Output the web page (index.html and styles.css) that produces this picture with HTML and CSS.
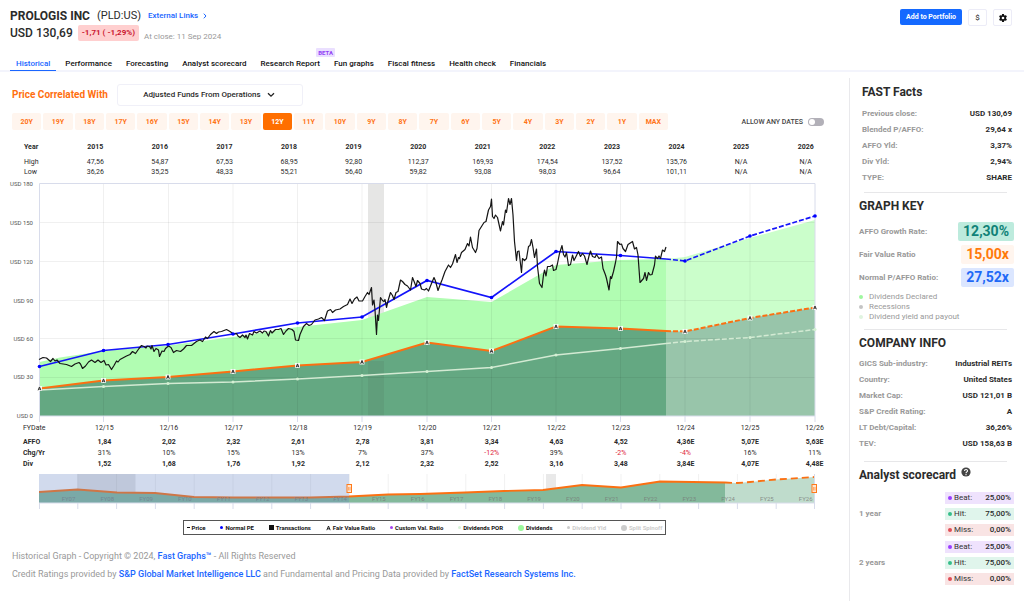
FILE: index.html
```html
<!DOCTYPE html>
<html lang="en">
<head>
<meta charset="utf-8">
<title>Prologis Inc (PLD:US)</title>
<meta name="viewport" content="width=device-width, initial-scale=1">
<link rel="stylesheet" href="styles.css">
</head>
<body>
<header class="top">
  <div class="top-row">
    <div class="identity">
      <div class="name-row">
        <h1>PROLOGIS INC</h1>
        <span class="ticker">(PLD:US)</span>
        <a class="external" href="#">External Links
          <svg viewBox="0 0 4 6" width="4" height="6" aria-hidden="true"><path d="M.8.7 3 3 .8 5.3" fill="none" stroke="currentColor"/></svg>
        </a>
      </div>
      <div class="price-row">
        <span class="price">USD 130,69</span>
        <span class="change">-1,71 ( -1,29%)</span>
        <span class="close-date">At close: 11 Sep 2024</span>
      </div>
    </div>
    <div class="actions">
      <button class="primary" type="button">Add to Portfolio</button>
      <button class="icon-button" type="button" aria-label="Currency">$</button>
      <button class="icon-button" type="button" aria-label="Settings">
        <svg viewBox="0 0 24 24" width="10" height="10" aria-hidden="true"><path fill="#111" d="M19.14 12.94c.04-.3.06-.61.06-.94s-.02-.64-.07-.94l2.03-1.58a.49.49 0 0 0 .12-.61l-1.92-3.32a.49.49 0 0 0-.59-.22l-2.39.96a7 7 0 0 0-1.62-.94l-.36-2.54a.48.48 0 0 0-.48-.41h-3.84a.48.48 0 0 0-.47.41l-.36 2.54a7.4 7.4 0 0 0-1.62.94l-2.39-.96a.48.48 0 0 0-.59.22L2.74 8.87a.48.48 0 0 0 .12.61l2.03 1.58a7.5 7.5 0 0 0 0 1.88l-2.03 1.58a.49.49 0 0 0-.12.61l1.92 3.32c.12.22.37.29.59.22l2.39-.96c.5.38 1.03.7 1.62.94l.36 2.54c.05.24.24.41.48.41h3.84c.24 0 .44-.17.47-.41l.36-2.54a7.3 7.3 0 0 0 1.62-.94l2.39.96c.22.08.47 0 .59-.22l1.92-3.32a.48.48 0 0 0-.12-.61zM12 15.2a3.2 3.2 0 1 1 0-6.4 3.2 3.2 0 0 1 0 6.4z"/></svg>
      </button>
    </div>
  </div>
  <nav class="tabs">
    <a class="active" href="#">Historical</a>
    <a href="#">Performance</a>
    <a href="#">Forecasting</a>
    <a href="#">Analyst scorecard</a>
    <a href="#">Research Report<span class="beta">BETA</span></a>
    <a href="#">Fun graphs</a>
    <a href="#">Fiscal fitness</a>
    <a href="#">Health check</a>
    <a href="#">Financials</a>
  </nav>
</header>

<div class="layout">
<main>
  <div class="metric-row">
    <label for="metric">Price Correlated With</label>
    <div class="select-wrap">
      <select id="metric"><option>Adjusted Funds From Operations</option></select>
      <svg class="chevron" viewBox="0 0 8 6" width="8" height="6" aria-hidden="true"><path d="M1 1.2 4 4.2 7 1.2" fill="none" stroke="#222" stroke-width="1.3"/></svg>
    </div>
  </div>
  <div class="range-row">
    <div class="ranges">
      <button type="button">20Y</button><button type="button">19Y</button><button type="button">18Y</button><button type="button">17Y</button><button type="button">16Y</button><button type="button">15Y</button><button type="button">14Y</button><button type="button">13Y</button><button type="button" class="selected">12Y</button><button type="button">11Y</button><button type="button">10Y</button><button type="button">9Y</button><button type="button">8Y</button><button type="button">7Y</button><button type="button">6Y</button><button type="button">5Y</button><button type="button">4Y</button><button type="button">3Y</button><button type="button">2Y</button><button type="button">1Y</button><button type="button">MAX</button>
    </div>
    <label class="toggle" for="any-dates">ALLOW ANY DATES <input id="any-dates" type="checkbox"></label>
  </div>

  <table class="years high-low">
    <thead><tr><th>Year</th><th>2015</th><th>2016</th><th>2017</th><th>2018</th><th>2019</th><th>2020</th><th>2021</th><th>2022</th><th>2023</th><th>2024</th><th>2025</th><th>2026</th></tr></thead>
    <tbody>
      <tr><th>High</th><td>47,56</td><td>54,87</td><td>67,53</td><td>68,95</td><td>92,80</td><td>112,37</td><td>169,93</td><td>174,54</td><td>137,52</td><td>135,76</td><td>N/A</td><td>N/A</td></tr>
      <tr><th>Low</th><td>36,26</td><td>35,25</td><td>48,33</td><td>55,21</td><td>56,40</td><td>59,82</td><td>93,08</td><td>98,03</td><td>96,64</td><td>101,11</td><td>N/A</td><td>N/A</td></tr>
    </tbody>
  </table>

  <svg class="chart" viewBox="0 177 849 245" role="img" aria-label="Price and AFFO history">
    <defs>
      <g id="fair-mark"><rect x="-2.5" y="-2.5" width="5" height="5" fill="#fff" fill-opacity=".9"/><path d="M-1.4 1.8 0-1.6 1.4 1.8M-.8.6H.8" fill="none" stroke="#222" stroke-width=".9"/></g>
    </defs>
    <rect x="368" y="184" width="16" height="232" fill="#e6e6e5"/>
    <path class="area-light" d="M39.500 362 60 357.500 103.500 351 168 345.500 233 337 297.500 327 362 320 427 297 491.500 302 556 265 620.500 260 666 259V331L620.500 328.500 556 326.500 491.500 351 427 342.500 362 362 297.500 365.500 233 371.500 168 377 103.500 380.500 39.500 388.500Z"/>
    <path class="area-light-est" d="M666 259 685 257 750 238 815 220V307.500L750 318 685 331.500 666 331Z"/>
    <path class="area-dark" d="M39.500 388.500 103.500 380.500 168 377 233 371.500 297.500 365.500 362 362 427 342.500 491.500 351 556 326.500 620.500 328.500 666 331V416H39.500Z"/>
    <path class="area-dark-est" d="M666 331 685 331.500 750 318 815 307.500V416H666Z"/>
    <rect x="368" y="361" width="16" height="55" fill="#333" fill-opacity=".08"/>
    <path class="grid" d="M39 222.500H815M39 261.500H815M39 300.500H815M39 338.500H815M39 377.500H815M103.500 184V416M168.500 184V416M233 184V416M297.500 184V416M362 184V416M427 184V416M491.500 184V416M556 184V416M620.500 184V416M685 184V416M750 184V416"/>
    <path class="frame" d="M39.500 422V183.500H815V422M39.500 416H815M103.500 416v6M168.500 416v6M233 416v6M297.500 416v6M362 416v6M427 416v6M491.500 416v6M556 416v6M620.500 416v6M685 416v6M750 416v6"/>
    <g class="payout"><path d="M39.500 390 103.500 386.500 168 383.500 233 382 297.500 379 362 375.500 427 371.500 491.500 367.500 556 355 620.500 348.500 666 343.500"/><path class="dashed" d="M666 343.500 685 341.500 750 337.500 815 329.500"/></g>
    <g class="fair"><path d="M39.500 388.500 103.500 380.500 168 377 233 371.500 297.500 365.500 362 362 427 342.500 491.500 351 556 326.500 620.500 328.500 666 331"/><path class="dashed" d="M666 331 685 331.500 750 318 815 307.500"/></g>
    <g class="normal"><path d="M39.500 366.500 103.500 350.500 168 344.500 233 334 297.500 323 362 317 427 280.500 491.500 297.500 556 251.500 620.500 255.500 666 259"/><path class="dashed" d="M666 259 685 261 750 236 815 216"/></g>
    <path class="price-line" d="M39 359.500 43 357.500 46.500 358 50.500 361.500 53 358.500 55 361 57 360 60 363.500 66.500 364.500 71.500 366.500 75 364 79 362.500 80.500 364 82.500 368.500 85.500 366 88.500 362 91.500 360 95 362.500 98 360 101 362.500 104 360.500 106 365 108.500 364.500 111.500 369.500 114 365.500 116.500 361 118 362 120 359.500 126.500 356 130 354.500 132.500 351.500 135.500 353.500 139 348.500 141.500 345.500 144 346.500 146 348 147 346 149.500 346.500 151 349 152 345.500 154 351.500 156 348.500 158.500 350 159.500 356.500 162 351 164 351.500 165.500 348.500 168.500 346 171 347.500 173.500 352.500 176.500 350.500 180.500 351.500 183.500 349 186.500 345.500 191.500 345.500 196.500 341.500 200 340 202.500 341.500 205.500 337 207.500 338.500 210.500 334.500 214 331.500 216.500 333.500 218.500 332 221.500 331.500 226.500 329.500 230 331.500 233.500 334 236.500 333.500 238 336 240 337.500 242.500 335 245 337.500 246 335 247.500 339 249.500 333.500 252.500 335 254 331.500 256.500 333 260 331 262.500 333 264 331 266 331.500 268.500 336 270.500 330.500 272 333 275.500 329.500 278.500 329.500 281 328.500 283.500 334.500 286 331 288.500 328.500 292 329.500 294 331.500 295.500 340 298.500 340.500 300 334.500 303.500 326.500 306.500 323.500 309 325.500 311.500 324.500 315 320 318.500 319 321.500 317.500 324.500 320.500 327.500 311 330.500 309.500 332.500 312.500 335.500 310 340 309 343.500 306.500 347.500 304.500 350 299 352 303.500 354.500 299 357 297 359 301 362.500 301 365 296.500 367.500 292.500 369 294.500 371.500 287.500 372.500 305 374 300 375 310 376.500 334.500 377.500 315 378.500 320.500 380.500 297.500 382.500 300.500 384 301.500 385 299.500 386.500 307.500 388 301 390.500 292.500 392.500 295.500 394 299.500 396 292.500 398 291.500 400.500 280 402.500 281.500 405 284.500 407.500 286 410.500 290 412.500 277.500 414.500 282.500 416 286.500 417.500 280.500 420 283.500 421.500 289 424.500 290 426.500 288.500 428.500 291 431.500 283.500 434 277.500 435.500 281 438 290.500 440 285 442 280 445 271.500 448.500 265 450.500 267.500 452.500 264 455.500 254.500 457 262.500 458.500 257.500 459.500 258.500 461.500 252.500 465 249.500 467.500 243.500 469 246 470.500 237 472.500 247.500 475.500 252.500 477 248.500 479 230.500 481.500 226.500 484 222.500 486 221.500 488.500 210 490.500 206.500 491.500 199 492.500 216.500 494 218.500 495.500 215 497.500 217.500 500.500 231 502.500 221.500 503.500 225 505.500 210 506.500 212.500 508.500 198.500 510 204.500 511.500 198.500 513 215 514.500 241.500 516.500 260.500 517.500 251.500 519 251 521.500 272.500 522.500 258.500 524.500 260.500 526.500 258.500 528.500 246.500 530 245.500 531.500 239.500 533 247.500 534.500 257.500 536.500 249 537.500 266.500 539.500 283.500 542 287.500 543.500 275 544.500 270 546 276 547.500 266.500 550 266.500 552.500 265 553.500 270.500 556 269.500 557.500 263.500 559.500 253.500 562 245.500 563.500 254.500 565 257 566.500 252.500 568.500 265.500 570.500 264.500 572.500 255 574 260.500 576 256.500 578.500 251.500 580.500 256.500 582.500 253.500 584.500 256 587 264.500 589 256 590.500 251 592.500 256.500 595 257.500 596.500 254.500 599 258.500 601.500 257 603 268.500 605.500 275 606.500 278.500 609 290 610.500 276.500 611.500 278.500 613.500 271.500 615.500 262.500 616.500 257 617.500 241.500 620 244.500 621.500 244 623 248.500 625.500 251.500 628 244.500 632.500 241.500 634.500 249 636.500 247.500 638 255 640 282.500 643.500 278.500 645 272.500 646.500 280.500 648.500 272.500 650 275 652 274.500 654.500 265 655.500 256 657.500 258.500 659 256 660.500 258.500 662.500 250 664.500 251.500 666 247"/>
    <g fill="#d3f0d3"><circle cx="103.500" cy="386.500" r="1.500"/><circle cx="168" cy="383.500" r="1.500"/><circle cx="233" cy="382" r="1.500"/><circle cx="297.500" cy="379" r="1.500"/><circle cx="362" cy="375.500" r="1.500"/><circle cx="427" cy="371.500" r="1.500"/><circle cx="491.500" cy="367.500" r="1.500"/><circle cx="556" cy="355" r="1.500"/><circle cx="620.500" cy="348.500" r="1.500"/><circle cx="685" cy="341.500" r="1.500"/><circle cx="750" cy="337.500" r="1.500"/><circle cx="815" cy="329.500" r="1.500"/></g>
    <g fill="#00f"><circle cx="39.500" cy="366.500" r="1.800"/><circle cx="103.500" cy="350.500" r="1.800"/><circle cx="168" cy="344.500" r="1.800"/><circle cx="233" cy="334" r="1.800"/><circle cx="297.500" cy="323" r="1.800"/><circle cx="362" cy="317" r="1.800"/><circle cx="427" cy="280.500" r="1.800"/><circle cx="491.500" cy="297.500" r="1.800"/><circle cx="556" cy="251.500" r="1.800"/><circle cx="620.500" cy="255.500" r="1.800"/><circle cx="685" cy="261" r="1.800"/><circle cx="750" cy="236" r="1.800"/><circle cx="815" cy="216" r="1.800"/></g>
    <use href="#fair-mark" x="39.500" y="388.500"/><use href="#fair-mark" x="103.500" y="380.500"/><use href="#fair-mark" x="168" y="377"/><use href="#fair-mark" x="233" y="371.500"/><use href="#fair-mark" x="297.500" y="365.500"/><use href="#fair-mark" x="362" y="362"/><use href="#fair-mark" x="427" y="342.500"/><use href="#fair-mark" x="491.500" y="351"/><use href="#fair-mark" x="556" y="326.500"/><use href="#fair-mark" x="620.500" y="328.500"/><use href="#fair-mark" x="685" y="331.500"/><use href="#fair-mark" x="750" y="318"/><use href="#fair-mark" x="815" y="307.500"/>
    <g class="axis"><text x="33" y="186">USD 180</text><text x="33" y="225">USD 150</text><text x="33" y="264">USD 120</text><text x="33" y="303">USD 90</text><text x="33" y="341">USD 60</text><text x="33" y="379">USD 30</text><text x="33" y="418">USD 0</text></g>
  </svg>

  <table class="years fiscal">
    <thead><tr><th>FYDate</th><th>12/15</th><th>12/16</th><th>12/17</th><th>12/18</th><th>12/19</th><th>12/20</th><th>12/21</th><th>12/22</th><th>12/23</th><th>12/24</th><th>12/25</th><th>12/26</th></tr></thead>
    <tbody>
      <tr class="strong"><th>AFFO</th><td>1,84</td><td>2,02</td><td>2,32</td><td>2,61</td><td>2,78</td><td>3,81</td><td>3,34</td><td>4,63</td><td>4,52</td><td>4,36E</td><td>5,07E</td><td>5,63E</td></tr>
      <tr><th>Chg/Yr</th><td>31%</td><td>10%</td><td>15%</td><td>13%</td><td>7%</td><td>37%</td><td class="neg">-12%</td><td>39%</td><td class="neg">-2%</td><td class="neg">-4%</td><td>16%</td><td>11%</td></tr>
      <tr class="strong"><th>Div</th><td>1,52</td><td>1,68</td><td>1,76</td><td>1,92</td><td>2,12</td><td>2,32</td><td>2,52</td><td>3,16</td><td>3,48</td><td>3,84E</td><td>4,07E</td><td>4,48E</td></tr>
    </tbody>
  </table>

  <svg class="chart" viewBox="0 470 849 42" role="img" aria-label="Range navigator">
    <rect x="77.500" y="474" width="58" height="29" fill="#e6e6e5"/><rect x="546" y="474" width="10" height="29" fill="#e9e9e9"/>
    <path class="grid" d="M77.800 474V503M116.600 474V503M155.400 474V503M194.200 474V503M233 474V503M271.800 474V503M310.600 474V503M349.400 474V503M388.200 474V503M427 474V503M465.800 474V503M504.600 474V503M543.400 474V503M582.200 474V503M621 474V503M659.800 474V503M698.600 474V503M737.400 474V503M776.200 474V503"/>
    <path class="nav-fill" d="M39 492 77.500 489.500 117 492.500 155 493 194 497 233 497.500 310 497.500 349 496.500 388 494.500 420 494 465 492.500 504 491 543 490 582 485 621 487.500 660 481.500 725 482.500V503H39Z"/>
    <path class="nav-fill-est" d="M725 482.500 737 483 750 482 776 479.500 815 477V503H725Z"/>
    <g class="nav-line"><path d="M39 492 77.500 489.500 117 492.500 155 493 194 497 233 497.500 310 497.500 349 496.500 388 494.500 420 494 465 492.500 504 491 543 490 582 485 621 487.500 660 481.500 725 482.500"/><path stroke-dasharray="7 4" d="M725 482.500 737 483 750 482 776 479.500 815 477"/></g>
    <g class="nav-years"><text x="68.500" y="501">FY07</text><text x="107.300" y="501">FY08</text><text x="146.100" y="501">FY09</text><text x="184.900" y="501">FY10</text><text x="223.700" y="501">FY11</text><text x="262.500" y="501">FY12</text><text x="301.300" y="501">FY13</text><text x="340.100" y="501">FY14</text><text x="378.900" y="501">FY15</text><text x="417.700" y="501">FY16</text><text x="456.500" y="501">FY17</text><text x="495.300" y="501">FY18</text><text x="534.100" y="501">FY19</text><text x="572.900" y="501">FY20</text><text x="611.700" y="501">FY21</text><text x="650.500" y="501">FY22</text><text x="689.300" y="501">FY23</text><text x="728.100" y="501">FY24</text><text x="766.900" y="501">FY25</text><text x="805.700" y="501">FY26</text></g>
    <rect x="39" y="474" width="310" height="29" fill="#6685c2" fill-opacity=".3"/>
    <path class="frame" d="M39 503H815M39.500 503v6M77.800 503v6M116.600 503v6M155.400 503v6M194.200 503v6M233 503v6M271.800 503v6M310.600 503v6M349.400 503v6M388.200 503v6M427 503v6M465.800 503v6M504.600 503v6M543.400 503v6M582.200 503v6M621 503v6M659.800 503v6M698.600 503v6M737.400 503v6M776.200 503v6M814.500 474v35"/>
    <g fill="#ffe6d1" stroke="#ff7a1a"><rect x="347" y="484.500" width="4.500" height="8"/><rect x="812" y="484.500" width="4.500" height="8"/><path d="M348.600 487v3.500M350 487v3.500M813.600 487v3.500M815 487v3.500" stroke-width=".6"/></g>
  </svg>

  <ul class="legend">
    <li><i class="mark dash"></i>Price</li>
    <li><i class="mark dot blue"></i>Normal PE</li>
    <li><i class="mark square"></i>Transactions</li>
    <li><svg viewBox="0 0 5 6" width="5" height="6" aria-hidden="true"><path d="M.8 5.2 2.500 1 4.200 5.200M1.500 3.800H3.500" fill="none" stroke="#111" stroke-width=".9"/></svg>Fair Value Ratio</li>
    <li><i class="mark dot purple"></i>Custom Val. Ratio</li>
    <li><i class="mark dot pale"></i>Dividends POR</li>
    <li><i class="mark dot big green"></i>Dividends</li>
    <li class="off"><i class="mark dot"></i>Dividend Yld</li>
    <li class="off"><i class="mark dot big"></i>Split Spinoff</li>
  </ul>

  <footer>
    <p>Historical Graph - Copyright © 2024, <a href="#">Fast Graphs™</a> - All Rights Reserved</p>
    <p>Credit Ratings provided by <a href="#">S&amp;P Global Market Intelligence LLC</a> and Fundamental and Pricing Data provided by <a href="#">FactSet Research Systems Inc.</a></p>
  </footer>
</main>

<aside>
  <section class="facts">
    <h2>FAST Facts</h2>
    <dl>
      <div><dt>Previous close:</dt><dd>USD 130,69</dd></div>
      <div><dt>Blended P/AFFO:</dt><dd>29,64 x</dd></div>
      <div><dt>AFFO Yld:</dt><dd>3,37%</dd></div>
      <div><dt>Div Yld:</dt><dd>2,94%</dd></div>
      <div><dt>TYPE:</dt><dd>SHARE</dd></div>
    </dl>
  </section>
  <section>
    <h2>GRAPH KEY</h2>
    <dl class="ratios">
      <div><dt>AFFO Growth Rate:</dt><dd class="growth">12,30%</dd></div>
      <div><dt>Fair Value Ratio</dt><dd class="fair-value">15,00x</dd></div>
      <div><dt>Normal P/AFFO Ratio:</dt><dd class="normal-value">27,52x</dd></div>
    </dl>
    <ul class="keys">
      <li><i class="bullet declared"></i>Dividends Declared</li>
      <li><i class="bullet recession"></i>Recessions</li>
      <li><i class="bullet yield"></i>Dividend yield and payout</li>
    </ul>
  </section>
  <section class="company">
    <h2>COMPANY INFO</h2>
    <dl>
      <div><dt>GICS Sub-industry:</dt><dd>Industrial REITs</dd></div>
      <div><dt>Country:</dt><dd>United States</dd></div>
      <div><dt>Market Cap:</dt><dd>USD 121,01 B</dd></div>
      <div><dt>S&amp;P Credit Rating:</dt><dd>A</dd></div>
      <div><dt>LT Debt/Capital:</dt><dd>36,26%</dd></div>
      <div><dt>TEV:</dt><dd>USD 158,63 B</dd></div>
    </dl>
  </section>
  <section>
    <h2>Analyst scorecard
      <svg viewBox="0 0 10 10" width="10" height="10" aria-hidden="true"><circle cx="5" cy="5" r="4.600" fill="#444"/><path d="M3.500 4C3.500 2 6.600 2 6.500 3.900 6.500 4.900 5 4.800 5 6.200M5 7v1.200" fill="none" stroke="#fff" stroke-width="1.100"/></svg>
    </h2>
    <div class="scores">
      <div class="score">
        <span>1 year</span>
        <dl><div class="beat"><dt>Beat:</dt><dd>25,00%</dd></div><div class="hit"><dt>Hit:</dt><dd>75,00%</dd></div><div class="miss"><dt>Miss:</dt><dd>0,00%</dd></div></dl>
      </div>
      <div class="score">
        <span>2 years</span>
        <dl><div class="beat"><dt>Beat:</dt><dd>25,00%</dd></div><div class="hit"><dt>Hit:</dt><dd>75,00%</dd></div><div class="miss"><dt>Miss:</dt><dd>0,00%</dd></div></dl>
      </div>
    </div>
  </section>
</aside>
</div>
</body>
</html>
```

FILE: styles.css
```css
* { box-sizing: border-box; }
body { display: flex; flex-direction: column; min-height: 100vh; margin: 0; background: #fff; color: #2b2b2b; font-family: Roboto, "Liberation Sans", sans-serif; font-size: 8px; line-height: 10px; }
h1, h2, p, ul, dl, dd { margin: 0; padding: 0; }
ul { list-style: none; }
a { color: #1a66ff; text-decoration: none; }
button, select, input { font: inherit; margin: 0; }
svg { flex: none; }

.top { border-bottom: 2px solid #f3f4fc; }
.top-row { display: flex; justify-content: space-between; align-items: flex-start; padding: 8px 12px 0 10px; }
.name-row, .price-row { display: flex; align-items: center; }
.name-row { gap: 7px; height: 16px; }
h1 { font-size: 12px; line-height: 16px; font-weight: 700; }
.ticker { font-size: 11px; line-height: 16px; }
.external { display: flex; align-items: center; gap: 5px; font-weight: 500; }
.price-row { gap: 5px; height: 18px; }
.price { font-size: 12px; font-weight: 500; }
.change { padding: 0 4px; border-radius: 2px; background: #ffcfcf; color: #cb1730; font-size: 8px; line-height: 16px; font-weight: 700; }
.close-date { color: #999; padding-top: 7px; }
.actions { display: flex; gap: 6px; padding-top: 1px; }
.primary { height: 16px; padding: 0 6px; border: 0; border-radius: 2px; background: #1469ff; color: #fff; font-size: 7px; font-weight: 700; }
.icon-button { display: flex; align-items: center; justify-content: center; width: 19px; height: 17px; padding: 0; border: 1px solid #ececf7; border-radius: 2px; background: #fff; color: #222; font-size: 8px; }
.tabs { display: flex; padding: 17px 0 0 10px; margin-bottom: -1px; }
.tabs a { position: relative; padding: 0 7px 2px; line-height: 9px; color: #111; font-weight: 500; border-bottom: 1px solid transparent; }
.tabs .active { padding: 0 6px 2px; color: #1a66ff; border-color: #1a66ff; margin-right: 2px; }
.beta { position: absolute; top: -11px; right: -8px; padding: 0 2px; border-radius: 1px; background: #eadfff; color: #9242f5; font-size: 6px; line-height: 9px; font-weight: 700; }

.layout { display: grid; flex: 1; grid-template-columns: minmax(0, 1fr) 175px; }
main { min-width: 0; padding-top: 12px; }
.metric-row { display: flex; align-items: center; gap: 9px; padding-left: 12px; }
.metric-row label { color: #ff6f0f; font-size: 10px; font-weight: 700; }
.select-wrap { position: relative; }
.select-wrap select { width: 186px; height: 22px; padding: 0 16px 0 0; border: 1px solid #f0f0f8; border-radius: 3px; background: #fff; color: #2b2b2b; font-weight: 500; appearance: none; text-align-last: center; }
.chevron { position: absolute; right: 28px; top: 8px; pointer-events: none; }
.range-row { display: flex; justify-content: space-between; align-items: center; padding: 7px 25px 9px 12px; }
.ranges { display: grid; grid-template-columns: repeat(21, minmax(0, 1fr)); gap: 2px; flex: 0 1 656px; }
.ranges button { height: 17px; padding: 0; border: 0; border-radius: 2px; background: #fff5ee; color: #ff7417; font-size: 7px; font-weight: 700; }
.ranges .selected { background: #ff6f00; color: #fff; }
.toggle { display: flex; align-items: center; gap: 5px; color: #444; font-size: 7px; font-weight: 500; }
.toggle input { display: flex; align-items: center; width: 16px; height: 8px; padding: 1px; border-radius: 4px; background: #b2b0b8; appearance: none; }
.toggle input::before { content: ""; width: 6px; height: 6px; border-radius: 50%; background: #fff; }

.years { table-layout: fixed; border-collapse: collapse; font-size: 7px; line-height: 11px; text-align: center; }
.years th, .years td { padding: 0; }
.years th { font-weight: 400; }
.years th:first-child { width: 39px; text-align: left; }
.high-low { width: calc(100% - 35px); margin-left: 24px; line-height: 10px; }
.high-low thead th { padding-bottom: 2px; font-weight: 700; line-height: 16px; }
.fiscal { width: calc(100% - 25px); margin-left: 23px; }
.fiscal th:first-child { width: 49px; }
.fiscal thead th { padding-bottom: 2px; line-height: 13px; }
.strong th, .strong td, .fiscal tbody th:first-child { font-weight: 700; }
.neg { color: #e0263c; }

.chart { display: block; width: 100%; height: auto; font-family: Roboto, "Liberation Sans", sans-serif; }
.grid { fill: none; stroke: #000; stroke-opacity: .06; }
.frame { fill: none; stroke: #d8dceb; }
.area-light { fill: #b1fdb2; }
.area-light-est { fill: #cbfecb; }
.area-dark { fill: #64a882; }
.area-dark-est { fill: #98c5aa; }
.payout path { fill: none; stroke: #d3ead3; stroke-width: 1.5; }
.fair path { fill: none; stroke: #fb7012; stroke-width: 2; }
.normal path { fill: none; stroke: #1414fa; stroke-width: 1.7; }
.chart .dashed { stroke-dasharray: 5 2; }
.price-line { fill: none; stroke: #151515; stroke-width: 1.2; stroke-linejoin: round; }
.axis text { font-size: 6px; fill: #555; text-anchor: end; }
.nav-fill { fill: #83b99b; }
.nav-fill-est { fill: #bfdccc; }
.nav-line path { fill: none; stroke: #fb7012; stroke-width: 1.8; }
.nav-years text { font-size: 6px; fill: #777; fill-opacity: .8; text-anchor: middle; }

.legend { display: flex; justify-content: space-between; width: 57%; min-width: 481px; height: 15px; margin: 8px auto 0; padding: 0 3px; border: 1px solid #555; color: #111; font-size: 6px; font-weight: 700; }
.legend li { display: flex; align-items: center; gap: 2px; }
.mark { width: 3px; height: 3px; background: #111; }
.dash { height: 1px; }
.square { width: 5px; height: 5px; }
.dot { border-radius: 50%; background: #ccc; }
.big { width: 6px; height: 6px; }
.blue { background: #00f; }
.purple { background: #a541ee; }
.pale { background: #d7f3d7; }
.green { background: #9cf99c; }
.off { color: #ccc; }
footer { padding: 12px 12px 0; color: #999; font-size: 9px; line-height: 18px; }
footer a { font-weight: 500; }

aside { margin-top: 6px; padding: 6px 12px 0 9px; border-left: 1px solid #e9e9ec; }
h2 { display: flex; align-items: flex-start; gap: 5px; font-size: 12px; line-height: 16px; font-weight: 700; }
.facts { padding-left: 3px; }
section + section::before { content: ""; display: block; height: 1px; margin: 0 5px 5px; background: #e7e7e9; }
dl > div { display: flex; justify-content: space-between; align-items: center; height: 16px; }
dt { color: #999; font-weight: 700; }
dd { font-weight: 700; text-align: right; }
.facts dl { padding: 6px 0; }
.ratios { padding-top: 6px; }
.ratios > div { height: 23px; }
.ratios dd { padding: 0 5px; margin-right: -2px; border-radius: 2px; font-size: 14px; line-height: 19px; }
.growth { background: #bdebdd; color: #108277; }
.fair-value { background: #fff5ee; color: #ff7a0a; }
.normal-value { background: #dbe6ff; color: #1f69f6; }
.keys { padding: 3px 0 7px; color: #999; }
.keys li { display: flex; align-items: center; gap: 6px; }
.bullet { width: 4px; height: 4px; border-radius: 50%; }
.declared { background: #9ff79f; }
.recession { background: #c4c4c4; }
.yield { background: #e0f4e0; }
.company dl { padding: 5px 0 9px; }
.scores { display: grid; gap: 5px; padding-top: 9px; }
.score { display: flex; justify-content: space-between; align-items: center; }
.score > span { color: #999; font-weight: 700; }
.score dl { display: grid; gap: 4px; width: 69px; margin-right: -2px; }
.score dl > div { height: 12px; padding: 0 3px; gap: 2px; }
.score dt { color: #333; font-weight: 400; }
.score dd { font-weight: 500; margin-left: auto; }
.score dl > div::before { content: ""; width: 4px; height: 4px; border-radius: 50%; }
.beat { background: #efe2fd; }
.beat::before { background: #9a3dff; }
.hit { background: #e0f5ec; }
.hit::before { background: #36bd8b; }
.miss { background: #f9e4e4; }
.miss::before { background: #e04e56; }
```
